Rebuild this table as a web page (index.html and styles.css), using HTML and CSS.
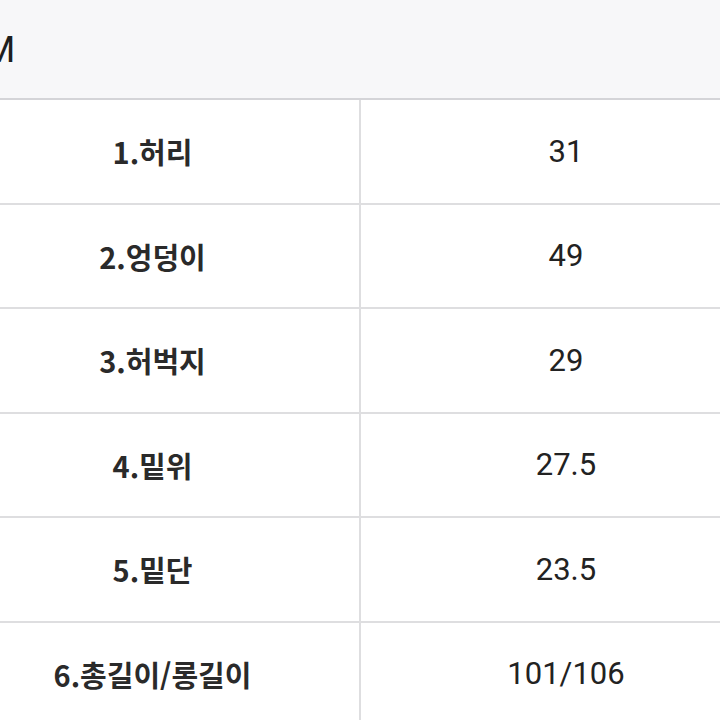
FILE: index.html
```html
<!DOCTYPE html>
<html lang="ko">
<head>
<meta charset="utf-8">
<link rel="stylesheet" href="styles.css">
</head>
<body>
<div class="frame">
  <div class="sheet">
    <div class="head">M</div>
    <div class="grid">
      <div class="label">1.허리</div><div class="value">31</div>
      <div class="label">2.엉덩이</div><div class="value">49</div>
      <div class="label">3.허벅지</div><div class="value">29</div>
      <div class="label">4.밑위</div><div class="value">27.5</div>
      <div class="label">5.밑단</div><div class="value">23.5</div>
      <div class="label">6.총길이/롱길이</div><div class="value">101/106</div>
    </div>
  </div>
</div>
</body>
</html>
```

FILE: styles.css
```css
html, body {
  margin: 0;
  padding: 0;
  background: #ffffff;
}
.frame {
  width: 720px;
  height: 720px;
  overflow: hidden;
}
.sheet {
  margin-left: -52px;
  width: 823px;
  font-family: Roboto, "Noto Sans CJK KR", sans-serif;
  color: #222222;
}
.head {
  height: 98px;
  background: #f7f7f9;
  border-bottom: 2px solid #d4d4d8;
  display: flex;
  align-items: center;
  padding-left: 35px;
  font-size: 37px;
  color: #1e1e1e;
}
.grid {
  display: grid;
  grid-template-columns: 413px 410px;
  grid-auto-rows: 104.5px;
}
.label, .value {
  display: flex;
  align-items: center;
  justify-content: center;
  border-bottom: 2px solid #dedee0;
  box-sizing: border-box;
}
.label {
  border-right: 2px solid #dedee0;
  font-family: "Noto Sans CJK KR", sans-serif;
  font-weight: 700;
  font-size: 29px;
  color: #2a2a2a;
  padding-right: 2px;
}
.value {
  font-size: 31px;
  color: #222222;
}
```
